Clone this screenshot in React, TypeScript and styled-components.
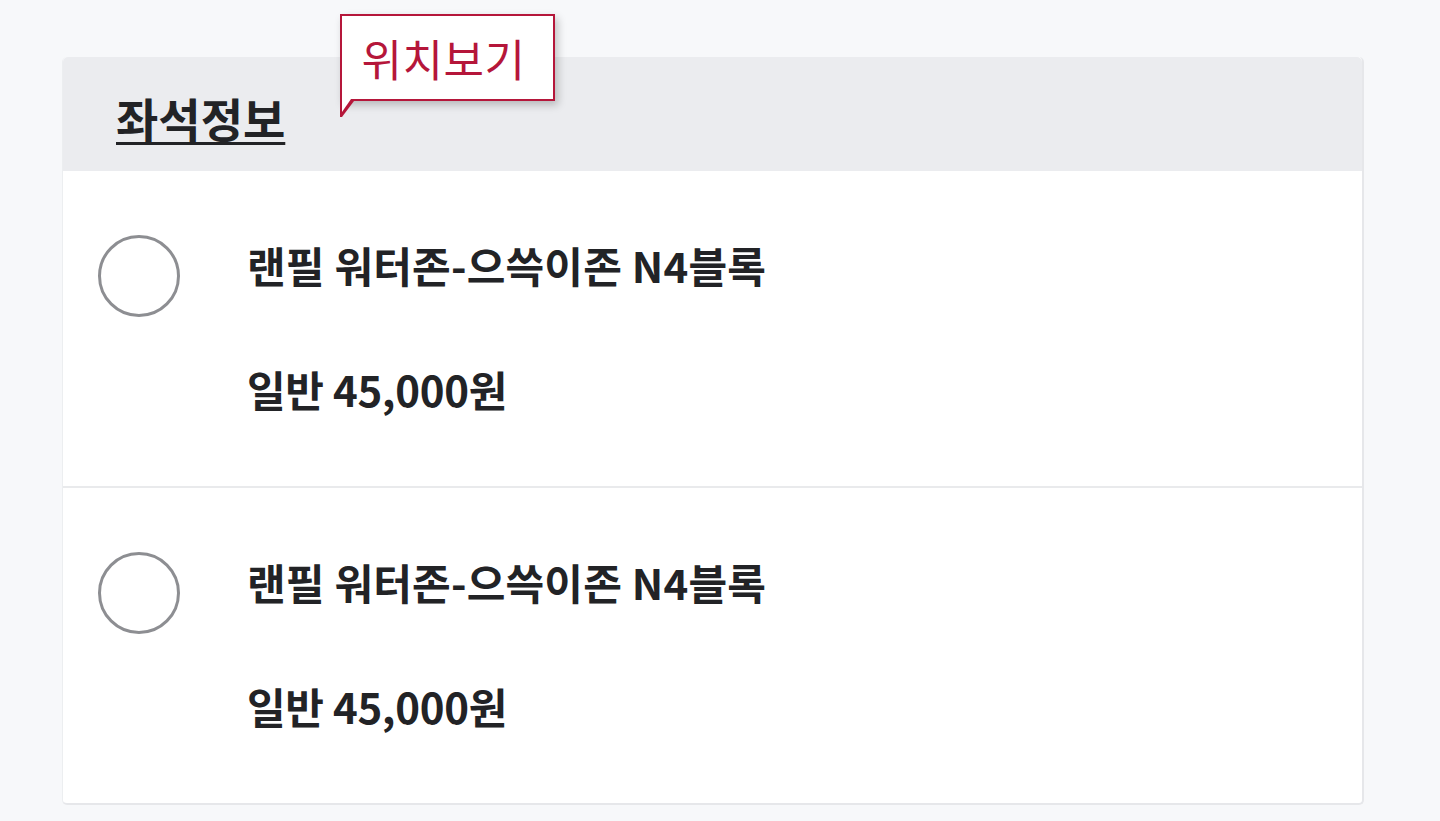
import React from "react";
import styled, { createGlobalStyle } from "styled-components";

const Global = createGlobalStyle`
  html, body { margin: 0; padding: 0; background: #f7f8fa; }
  body { font-family: "Noto Sans CJK KR", "Noto Sans", sans-serif; color: #222326; }
`;

const Page = styled.div`
  padding: 57px 76px 14px 62px;
`;

const Card = styled.section`
  position: relative;
  background: #ffffff;
  border: 2px solid #e6e7ea;
  border-top: none;
  border-left: 1px solid #eceef0;
  border-radius: 5px;
`;

const Header = styled.div`
  position: relative;
  height: 114px;
  background: #ebecef;
  border-radius: 5px 5px 0 0;
  display: flex;
  align-items: center;
  padding-left: 53px;
`;

const Title = styled.h2`
  margin: 6px 0 0;
  font-size: 46px;
  line-height: 60px;
  font-weight: 700;
  letter-spacing: 0;
  text-decoration: underline;
  text-decoration-thickness: 3px;
  text-underline-offset: 5px;
  color: #222326;
`;

const Tooltip = styled.div`
  position: absolute;
  left: 277px;
  top: -43px;
  width: 203px;
  height: 83px;
  padding-right: 8px;
  box-sizing: content-box;
  background: #fff;
  border: 2px solid #b5163a;
  box-shadow: 3px 4px 8px rgba(0, 0, 0, 0.22);
  display: flex;
  align-items: center;
  justify-content: center;
  font-size: 44px;
  color: #b5163a;
  letter-spacing: 0.5px;
  &::before {
    content: "";
    position: absolute;
    left: -2px;
    bottom: -18px;
    border-left: 2px solid #b5163a;
    border-top: 16px solid #b5163a;
    border-right: 12px solid transparent;
    width: 0;
    height: 0;
  }
  &::after {
    content: "";
    position: absolute;
    left: 0;
    bottom: -13px;
    border-top: 13px solid #fff;
    border-right: 9px solid transparent;
    width: 0;
    height: 0;
  }
`;

const Row = styled.label<{ $last?: boolean }>`
  display: flex;
  align-items: flex-start;
  padding: 64px 0 ${(p) => (p.$last ? "70px" : "70px")} 35px;
  border-bottom: ${(p) => (p.$last ? "none" : "2px solid #e9eaec")};
  cursor: pointer;
`;

const Radio = styled.span`
  flex: none;
  width: 76px;
  height: 76px;
  border-radius: 50%;
  border: 3px solid #8d8e92;
  box-sizing: content-box;
  margin-right: 67px;
`;

const Info = styled.div`
  display: flex;
  flex-direction: column;
  padding-top: 3px;
`;

const Name = styled.div`
  font-size: 42px;
  font-weight: 700;
  line-height: 54px;
  letter-spacing: 0.2px;
`;

const Spacer = styled.div`
  height: 70px;
`;

const Price = styled.div`
  font-size: 42px;
  font-weight: 700;
  line-height: 54px;
  letter-spacing: -0.3px;
`;

const seats = [
  { name: "랜필 워터존-으쓱이존 N4블록", price: "일반 45,000원" },
  { name: "랜필 워터존-으쓱이존 N4블록", price: "일반 45,000원" },
];

export default function App() {
  return (
    <>
      <Global />
      <Page>
        <Card>
          <Header>
            <Title>좌석정보</Title>
            <Tooltip>위치보기</Tooltip>
          </Header>
          {seats.map((s, i) => (
            <Row key={i} $last={i === seats.length - 1}>
              <Radio />
              <Info>
                <Name>{s.name}</Name>
                <Spacer />
                <Price>{s.price}</Price>
              </Info>
            </Row>
          ))}
        </Card>
      </Page>
    </>
  );
}
